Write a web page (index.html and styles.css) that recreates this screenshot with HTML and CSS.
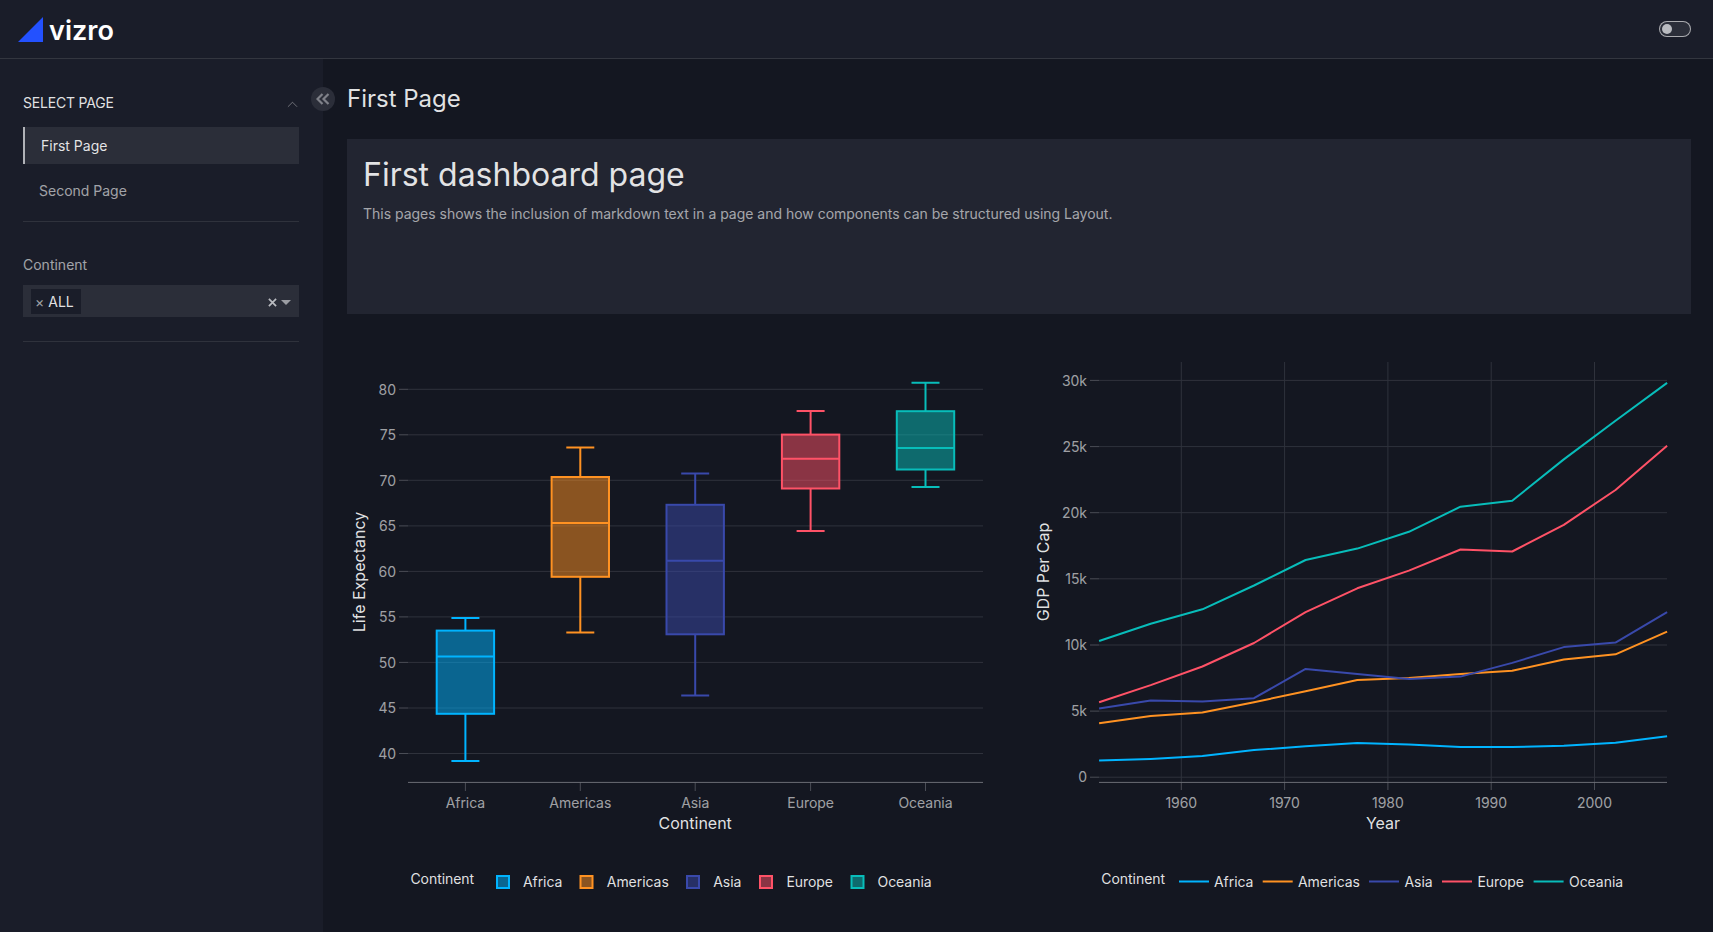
FILE: index.html
```html
<!DOCTYPE html>
<html lang="en">
<head>
<meta charset="utf-8">
<title>Vizro</title>
<link rel="stylesheet" href="styles.css">
</head>
<body>
<header class="topbar">
  <div class="brand">
    <svg class="brand-mark" viewBox="0 0 25 25" aria-hidden="true"><polygon points="0,25 25,25 25,0"/></svg>
    <span class="brand-name">vizro</span>
  </div>
  <div class="toggle"><span class="toggle-knob"></span></div>
</header>
<div class="shell">
  <aside class="sidebar">
    <div class="nav-head">
      <span>SELECT PAGE</span>
      <svg class="chevron" viewBox="0 0 12 7" aria-hidden="true"><path d="M1 6 L6 1 L11 6"/></svg>
    </div>
    <a class="nav-item active">First Page</a>
    <a class="nav-item">Second Page</a>
    <hr class="rule rule-nav">
    <label class="field-label">Continent</label>
    <div class="select">
      <span class="tag"><span class="tag-x">×</span>ALL</span>
      <svg class="clear" viewBox="0 0 10 10" aria-hidden="true"><path d="M1 1 L9 9 M9 1 L1 9"/></svg>
      <span class="caret"></span>
    </div>
    <hr class="rule rule-filter">
    <button class="collapse" aria-label="Collapse">
      <svg viewBox="0 0 14 12" aria-hidden="true"><path d="M6.5 1 L1.5 6 L6.5 11 M12.5 1 L7.5 6 L12.5 11"/></svg>
    </button>
  </aside>
  <main class="page">
    <h2 class="page-title">First Page</h2>
    <section class="card">
      <h1>First dashboard page</h1>
      <p>This pages shows the inclusion of markdown text in a page and how components can be structured using Layout.</p>
    </section>
    <section class="charts">
      <svg class="chart" viewBox="347 338 660 594" role="img">
        <g class="grid">
          <path d="M408 389.3H983M408 434.8H983M408 480.3H983M408 525.9H983M408 571.4H983M408 616.9H983M408 662.4H983M408 708H983M408 753.5H983"/>
        </g>
        <path class="ticks" d="M399 389.3H408M399 434.8H408M399 480.3H408M399 525.9H408M399 571.4H408M399 616.9H408M399 662.4H408M399 708H408M399 753.5H408M465.4 782V791M580.3 782V791M695.2 782V791M810.6 782V791M925.5 782V791"/>
        <path class="axis" d="M408 782.4H983"/>

        <g class="tick-y">
          <text x="396" y="394.5">80</text><text x="396" y="440">75</text><text x="396" y="485.5">70</text>
          <text x="396" y="531">65</text><text x="396" y="576.5">60</text><text x="396" y="622">55</text>
          <text x="396" y="667.5">50</text><text x="396" y="713">45</text><text x="396" y="758.5">40</text>
        </g>
        <g class="tick-x">
          <text x="465.4" y="808">Africa</text><text x="580.3" y="808">Americas</text><text x="695.2" y="808">Asia</text>
          <text x="810.6" y="808">Europe</text><text x="925.5" y="808">Oceania</text>
        </g>
        <text class="axis-title" x="695.2" y="829">Continent</text>
        <text class="axis-title" transform="translate(365 572) rotate(-90)">Life Expectancy</text>

        <g class="box s-africa">
          <rect x="436.7" y="630.6" width="57.4" height="83.2"/>
          <path d="M436.7 656.6H494.1M465.4 630.6V618M451.4 618H479.4M465.4 713.8V760.9M451.4 760.9H479.4"/>
        </g>
        <g class="box s-americas">
          <rect x="551.6" y="477" width="57.4" height="99.8"/>
          <path d="M551.6 523H609M580.3 477V447.6M566.3 447.6H594.3M580.3 576.8V632.5M566.3 632.5H594.3"/>
        </g>
        <g class="box s-asia">
          <rect x="666.5" y="504.8" width="57.4" height="129.5"/>
          <path d="M666.5 560.8H723.9M695.2 504.8V473.6M681.2 473.6H709.2M695.2 634.3V695.6M681.2 695.6H709.2"/>
        </g>
        <g class="box s-europe">
          <rect x="781.9" y="434.6" width="57.4" height="53.9"/>
          <path d="M781.9 458.8H839.3M810.6 434.6V410.9M796.6 410.9H824.6M810.6 488.5V531.1M796.6 531.1H824.6"/>
        </g>
        <g class="box s-oceania">
          <rect x="896.8" y="411.2" width="57.4" height="58.3"/>
          <path d="M896.8 448H954.2M925.5 411.2V382.7M911.5 382.7H939.5M925.5 469.5V487M911.5 487H939.5"/>
        </g>

        <text class="legend-title" x="410.4" y="884">Continent</text>
        <g class="swatch">
          <rect class="s-africa" x="497" y="876" width="12" height="12"/>
          <rect class="s-americas" x="580.5" y="876" width="12" height="12"/>
          <rect class="s-asia" x="687" y="876" width="12" height="12"/>
          <rect class="s-europe" x="760" y="876" width="12" height="12"/>
          <rect class="s-oceania" x="851.5" y="876" width="12" height="12"/>
        </g>
        <g class="legend-text">
          <text x="522.9" y="887">Africa</text><text x="606.8" y="887">Americas</text><text x="713.2" y="887">Asia</text>
          <text x="786.4" y="887">Europe</text><text x="877.5" y="887">Oceania</text>
        </g>
      </svg>

      <svg class="chart" viewBox="1031 338 660 594" role="img">
        <g class="grid">
          <path d="M1099 777.2H1667M1099 711.1H1667M1099 645H1667M1099 578.8H1667M1099 512.7H1667M1099 446.6H1667M1099 380.4H1667"/>
          <path d="M1181.3 362V782M1284.6 362V782M1387.9 362V782M1491.2 362V782M1594.5 362V782"/>
        </g>
        <path class="ticks" d="M1090 777.2H1099M1090 711.1H1099M1090 645H1099M1090 578.8H1099M1090 512.7H1099M1090 446.6H1099M1090 380.4H1099M1181.3 782V790M1284.6 782V790M1387.9 782V790M1491.2 782V790M1594.5 782V790"/>
        <path class="axis" d="M1099 782.4H1667"/>

        <g class="tick-y">
          <text x="1087" y="385.5">30k</text><text x="1087" y="451.7">25k</text><text x="1087" y="517.8">20k</text>
          <text x="1087" y="584">15k</text><text x="1087" y="650">10k</text><text x="1087" y="716.2">5k</text><text x="1087" y="782.3">0</text>
        </g>
        <g class="tick-x">
          <text x="1181.3" y="808">1960</text><text x="1284.6" y="808">1970</text><text x="1387.9" y="808">1980</text>
          <text x="1491.2" y="808">1990</text><text x="1594.5" y="808">2000</text>
        </g>
        <text class="axis-title" x="1383" y="829">Year</text>
        <text class="axis-title" transform="translate(1049 572) rotate(-90)">GDP Per Cap</text>

        <g class="line">
          <polyline class="s-africa" points="1099.1,760.6 1150.7,758.9 1202.4,756.1 1254,750.1 1305.6,746.2 1357.3,743 1408.9,744.4 1460.5,747 1512.2,747 1563.8,745.7 1615.5,742.8 1667.1,736.3"/>
          <polyline class="s-americas" points="1099.1,723.2 1150.7,716.1 1202.4,712.4 1254,702.2 1305.6,691.3 1357.3,679.9 1408.9,677.9 1460.5,674.1 1512.2,670.8 1563.8,659.6 1615.5,654.3 1667.1,631.7"/>
          <polyline class="s-asia" points="1099.1,708.5 1150.7,700.6 1202.4,701.4 1254,698.2 1305.6,668.9 1357.3,674.1 1408.9,678.9 1460.5,676.6 1512.2,662.9 1563.8,647.1 1615.5,642.6 1667.1,612.2"/>
          <polyline class="s-europe" points="1099.1,702.3 1150.7,685.1 1202.4,666.5 1254,643 1305.6,612.1 1357.3,588.3 1408.9,570.6 1460.5,549.5 1512.2,551.5 1563.8,524.8 1615.5,490 1667.1,445.8"/>
          <polyline class="s-oceania" points="1099.1,641 1150.7,623.8 1202.4,609.3 1254,585.5 1305.6,560 1357.3,548.6 1408.9,531.8 1460.5,506.7 1512.2,500.8 1563.8,459.4 1615.5,420.8 1667.1,382.9"/>
          <path class="s-africa" d="M1179 881.5H1209"/>
          <path class="s-americas" d="M1262.7 881.5H1292.7"/>
          <path class="s-asia" d="M1369 881.5H1399"/>
          <path class="s-europe" d="M1442 881.5H1472"/>
          <path class="s-oceania" d="M1533.6 881.5H1563.6"/>
        </g>
        <text class="legend-title" x="1101.3" y="884">Continent</text>
        <g class="legend-text">
          <text x="1214" y="887">Africa</text><text x="1298" y="887">Americas</text><text x="1404.5" y="887">Asia</text>
          <text x="1477.4" y="887">Europe</text><text x="1569" y="887">Oceania</text>
        </g>
      </svg>
    </section>
  </main>
</div>
</body>
</html>
```

FILE: styles.css
```css
* { box-sizing: border-box; }
html, body { margin: 0; height: 100%; }
body {
  display: flex;
  flex-direction: column;
  height: 932px;
  overflow: hidden;
  background: #141721;
  color: rgba(255, 255, 255, 0.88);
  font-family: Inter, "Liberation Sans", sans-serif;
  font-size: 14px;
}

/* Header */
.topbar {
  flex: none;
  height: 59px;
  display: flex;
  align-items: center;
  justify-content: space-between;
  padding: 0 22px 0 18px;
  background: #1a1d29;
  border-bottom: 1px solid #33363f;
}
.brand { display: flex; align-items: flex-end; gap: 6px; }
.brand-mark { width: 25px; height: 25px; display: block; }
.brand-mark polygon { fill: #2351ff; }
.brand-name {
  font-size: 27px;
  font-weight: 600;
  line-height: 25px;
  margin-bottom: -1px;
  color: #fff;
  letter-spacing: 0.05px;
}
.toggle {
  width: 32px;
  height: 16px;
  border: 1px solid rgba(255, 255, 255, 0.6);
  border-radius: 8px;
  background: #2b2e39;
  display: flex;
  align-items: center;
  padding-left: 2px;
  margin-top: -1px;
}
.toggle-knob { width: 10px; height: 10px; border-radius: 50%; background: #b9bbc0; }

/* Layout */
.shell { flex: 1; display: flex; min-height: 0; }

/* Sidebar */
.sidebar {
  position: relative;
  flex: none;
  width: 323px;
  padding: 35px 24px 0 23px;
  background: #1a1d29;
}
.nav-head {
  display: flex;
  align-items: center;
  justify-content: space-between;
  height: 17px;
  line-height: 17px;
  margin-bottom: 16px;
  letter-spacing: -0.2px;
  color: rgba(255, 255, 255, 0.88);
}
.chevron { width: 11px; height: 7px; margin: 3px 1px 0 0; fill: none; stroke: rgba(255, 255, 255, 0.4); stroke-width: 1; }
.nav-item {
  display: flex;
  align-items: center;
  height: 37px;
  padding-left: 16px;
  color: rgba(255, 255, 255, 0.6);
}
.nav-item + .nav-item { margin-top: 8px; }
.nav-item.active {
  background: #2b2e39;
  border-left: 2px solid #b0b2b7;
  color: rgba(255, 255, 255, 0.88);
}
.rule { height: 1px; margin: 0; border: 0; background: #2f323c; }
.rule-nav { margin-top: 12px; }
.field-label { display: block; margin-top: 34px; line-height: 17px; color: rgba(255, 255, 255, 0.6); }
.select {
  display: flex;
  align-items: center;
  height: 32px;
  margin-top: 12px;
  padding: 0 8px;
  background: #2b2e39;
  color: #fff;
}
.tag {
  display: flex;
  align-items: center;
  height: 25px;
  width: 50px;
  padding-left: 4px;
  background: #1a1d29;
  color: rgba(255, 255, 255, 0.88);
}
.tag-x { color: rgba(255, 255, 255, 0.6); margin-right: 4px; }
.clear { width: 9px; height: 9px; margin: 2px 0 0 auto; fill: none; stroke: #b9bbc0; stroke-width: 1.9; }
.caret {
  width: 0;
  height: 0;
  margin: 3px 0 0 4px;
  border-left: 5px solid transparent;
  border-right: 5px solid transparent;
  border-top: 5px solid #9b9da3;
}
.rule-filter { margin-top: 24px; }
.collapse {
  position: absolute;
  top: 28px;
  right: -12px;
  width: 24px;
  height: 24px;
  padding: 0;
  border: 0;
  border-radius: 50%;
  background: #2b2e39;
  display: flex;
  align-items: center;
  justify-content: center;
}
.collapse svg { width: 14px; height: 12px; fill: none; stroke: #7f8189; stroke-width: 2.2; }

/* Page */
.page {
  flex: 1;
  min-width: 0;
  display: flex;
  flex-direction: column;
  padding: 0 22px 0 24px;
}
.page-title {
  margin: 25px 0 0;
  height: 55px;
  font-size: 24px;
  font-weight: 400;
  line-height: 30px;
  color: rgba(255, 255, 255, 0.88);
}
.card {
  flex: none;
  height: 175px;
  padding: 16px;
  background: #222531;
}
.card h1 {
  margin: 0;
  font-size: 32px;
  font-weight: 400;
  line-height: 40px;
  color: rgba(255, 255, 255, 0.88);
}
.card p {
  margin: 10px 0 0;
  line-height: 18px;
  letter-spacing: -0.015px;
  color: rgba(255, 255, 255, 0.6);
}
.charts {
  flex: 1;
  display: grid;
  grid-template-columns: 1fr 1fr;
  gap: 24px;
  margin-top: 24px;
  min-height: 0;
}
.chart { display: block; width: 660px; height: 594px; }

/* Chart internals */
.chart text { font-family: Inter, "Liberation Sans", sans-serif; }
.grid path { fill: none; stroke: #2f323c; stroke-width: 1; }
.ticks { fill: none; stroke: #4a4d56; stroke-width: 1; }
.axis { fill: none; stroke: #6b6d75; stroke-width: 1; }
.tick-y text { font-size: 14px; fill: rgba(255, 255, 255, 0.6); text-anchor: end; letter-spacing: -0.05px; }
.tick-x text { font-size: 14px; fill: rgba(255, 255, 255, 0.6); text-anchor: middle; letter-spacing: -0.05px; }
.axis-title { font-size: 16px; fill: rgba(255, 255, 255, 0.88); text-anchor: middle; }
.legend-title, .legend-text text { font-size: 14px; fill: rgba(255, 255, 255, 0.88); letter-spacing: -0.05px; }

.s-africa { --series: #00b4ff; }
.s-americas { --series: #ff9222; }
.s-asia { --series: #3949ab; }
.s-europe { --series: #ff5267; }
.s-oceania { --series: #08bdba; }

.box rect { fill: var(--series); fill-opacity: 0.5; stroke: var(--series); stroke-width: 2; }
.box path { fill: none; stroke: var(--series); stroke-width: 2; }
.swatch rect { fill: var(--series); fill-opacity: 0.5; stroke: var(--series); stroke-width: 2; }
.line polyline, .line path { fill: none; stroke: var(--series); stroke-width: 2; stroke-linejoin: round; }
```
